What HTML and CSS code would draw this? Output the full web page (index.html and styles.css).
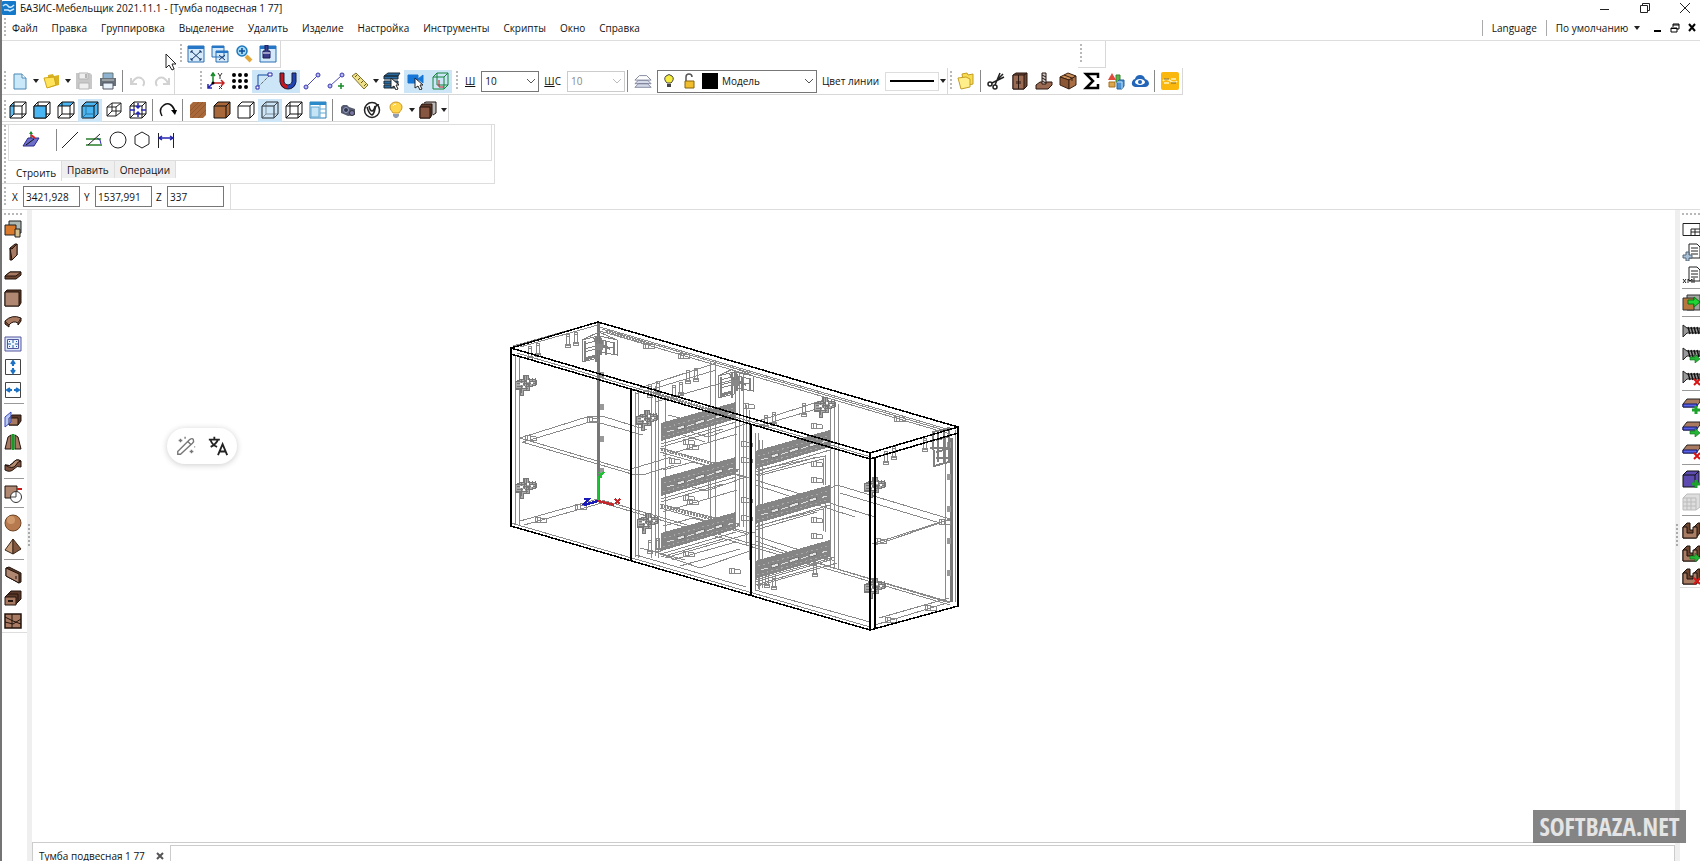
FILE: index.html
```html
<!DOCTYPE html>
<html lang="ru">
<head>
  <meta charset="utf-8">
  <title>БАЗИС-Мебельщик 2021.11.1 - [Тумба подвесная 1 77]</title>
  <meta name="viewport" content="width=device-width, initial-scale=1">
  <link rel="stylesheet" href="styles.css">
</head>
<body>
  <!-- общие символы -->
  <svg class="sprite" aria-hidden="true">
    <symbol id="cube" viewBox="0 0 18 18"><path d="M1 5h12v12H1zM1 5l4-4h12v12l-4 4M13 5l4-4M5 1v12h12M1 17l4-4" fill="none" stroke="#111"/></symbol>
    <symbol id="solid" viewBox="0 0 18 18"><path d="M1 5h12v12H1zM1 5l4-4h12v12l-4 4M13 5l4-4" stroke="#111"/></symbol>
    <symbol id="plus" viewBox="0 0 18 18"><path d="M14 10v8M10 14h8" stroke="#1ca32c" stroke-width="3"/></symbol>
    <symbol id="arrow" viewBox="0 0 18 18"><path d="M8 12h5V9l5 5-5 4v-3H8z" fill="#25b536" stroke="#0b6d18" stroke-width=".6"/></symbol>
    <symbol id="cross" viewBox="0 0 18 18"><path d="M12 11l6 6M18 11l-6 6" stroke="#d81414" stroke-width="2"/></symbol>
    <symbol id="pointer" viewBox="0 0 18 18"><path d="M8 6v10l3-2 2 4 2-1-2-4h3z" fill="#fff" stroke="#222"/></symbol>
    <symbol id="screw" viewBox="0 0 18 18"><path d="M1 3l4 3h13v5H5l-4 4z" fill="#999" stroke="#222"/><path d="M6 5l2 7M9 5l2 7M12 5l2 7M15 5l2 7" stroke="#111" stroke-width="1.4"/></symbol>
    <symbol id="edge" viewBox="0 0 18 18"><path d="M5 3h13v3l-4 5H1V8z" fill="#a87a60" stroke="#222"/><path d="M1 8h14v3H1z" fill="#5b63e8" stroke="#14186a"/></symbol>
    <symbol id="groove" viewBox="0 0 18 18"><path d="M1 6l4-4h3v7h4V6l4-4h2v10l-4 5H1z" fill="#6d4632" stroke="#1c100a"/><path d="M1 6h4v6h6V6h4v11H1z" fill="#a97c64" stroke="#1c100a"/></symbol>
    <symbol id="window" viewBox="0 0 18 18"><path d="M1 1h16v16H1z" fill="#d4e9fa" stroke="#2a6eb4"/><path d="M1 1h16v3H1z" fill="#2676c8"/></symbol>
    <symbol id="bulb" viewBox="0 0 18 18"><path d="M6 12C5 10 3 9 3 6a6 5 0 0 1 12 0c0 3-2 4-3 6z" fill="#ffd54a" stroke="#c9972a"/><path d="M6 13h6v2l-2 2H8l-2-2z" fill="#8f9bb0"/><path d="M6 5q1-2 3-2" fill="none" stroke="#fff"/></symbol>
    <!-- фурнитура модели -->
    <symbol id="rail" viewBox="0 0 76 38" overflow="visible">
      <path d="M0 20L75-1v17L0 38z" fill="#858585"/>
      <path d="M6 29l66-19" stroke="#ddd" stroke-dasharray="7 3 2 9" fill="none"/>
      <path d="M3 25L73 5M2 34l70-20" stroke="#a8a8a8" stroke-dasharray="2 3" fill="none"/>
      <path d="M16 24l7-2v3l-7 2zM34 19l9-3v3l-9 3zM54 13l7-2v3l-7 2z" fill="#e4e4e4" stroke="#666" stroke-width=".7"/>
      <path d="M0 41l75-22M0 44l62-18" stroke="#888" fill="none"/>
    </symbol>
    <symbol id="hinge" viewBox="0 0 24 24" overflow="visible">
      <path d="M1 9l5-4h3V1h5v4l8 1v5l-7 2v3H9v5H6v-6H1z" fill="#aaa"/>
      <path d="M1 9l5-4h3V1h5v4l8 1v5l-7 2v3H9v5H6v-6H1zM1 7h22M3 9h18M3 12h16M2 14h12M7 5v14M10 1v14M12 2v14M15 4v11M18 4v9M21 4v8M9 4l6 8M5 6l8 8" fill="none" stroke="#777"/>
      <path d="M6 10h3M13 7h2M17 9h2M9 13h2" stroke="#fff" stroke-width="1.500"/>
    </symbol>
    <symbol id="plate" viewBox="0 0 36 28" overflow="visible">
      <path d="M0 5l16-4v22L0 27zM18 1l17 4v15l-17-3zM2 9l12-3v5L2 14zM2 17l12-3v6L2 23zM20 5l12 3v5l-12-2zM0 5l17-8 18 8" fill="none" stroke="#808080"/>
      <path d="M3 6v18M14 1v26M16 8l12 6M14 12h9M24 6v14M32 7v12M12 3l8 12M19 3v17M2 25l12-4" stroke="#808080" stroke-width="2" fill="none"/>
      <path d="M13 9h8v6h-8z" fill="#888"/>
    </symbol>
    <symbol id="pin" viewBox="0 0 6 14" overflow="visible"><path d="M1 2h3v9H1zM1 2l1-2h2v9M0 10h5v3H0z" fill="none" stroke="#888"/></symbol>
    <symbol id="cam" viewBox="0 0 12 8" overflow="visible"><circle cx="4" cy="4" r="3" fill="none" stroke="#888"/><path d="M6 2l6 1v3L6 6M3 1v6" fill="none" stroke="#888"/></symbol>
  </svg>

  <header class="titlebar">
    <svg class="logo" viewBox="0 0 14 14"><rect width="14" height="14" rx="1" fill="#1479c9"/><path d="M1 5q3-3 5 0t6-1M2 9h4l2 1 4-2" fill="none" stroke="#cfeaff" stroke-width="1.500"/></svg>
    <h1 class="caption">БАЗИС-Мебельщик 2021.11.1 - [Тумба подвесная 1 77]</h1>
    <div class="window-buttons">
      <button type="button" aria-label="Свернуть"><svg viewBox="0 0 10 10"><path d="M0 6.500h9" stroke="#222"/></svg></button>
      <button type="button" aria-label="Восстановить"><svg viewBox="0 0 10 10" fill="none" stroke="#222"><path d="M.5 2.500h7v7h-7zM2.500 2.500v-2h7v7h-2"/></svg></button>
      <button type="button" aria-label="Закрыть"><svg viewBox="0 0 10 10" stroke="#222"><path d="M0 0l10 10M10 0L0 10"/></svg></button>
    </div>
  </header>

  <nav class="menubar">
    <div class="grip"></div>
    <button type="button">Файл</button>
    <button type="button">Правка</button>
    <button type="button">Группировка</button>
    <button type="button">Выделение</button>
    <button type="button">Удалить</button>
    <button type="button">Изделие</button>
    <button type="button">Настройка</button>
    <button type="button">Инструменты</button>
    <button type="button">Скрипты</button>
    <button type="button">Окно</button>
    <button type="button">Справка</button>
    <div class="menubar-right">
      <button type="button" class="framed">Language</button>
      <button type="button" class="framed">По умолчанию <span class="tri"></span></button>
      <button type="button" class="mdi" aria-label="Свернуть документ"><svg viewBox="0 0 10 10"><path d="M1 8h7" stroke="#000" stroke-width="2"/></svg></button>
      <button type="button" class="mdi" aria-label="Восстановить документ"><svg viewBox="0 0 10 10" fill="none" stroke="#000"><path d="M1 5h6v4H1zM3 4V1h6v5H7M3 2h6M1 5.500h6"/></svg></button>
      <button type="button" class="mdi" aria-label="Закрыть документ"><svg viewBox="0 0 10 10" stroke="#000" stroke-width="2"><path d="M2 1l6 7M8 1L2 8"/></svg></button>
    </div>
  </nav>

  <div class="toolrow toolrow-views">
    <div class="toolbar toolbar-zoom">
      <div class="grip"></div>
      <button type="button" class="tool" aria-label="Показать все"><svg viewBox="0 0 18 18"><use href="#window"/><path d="M4 6l10 9M14 6L4 15M4 8V6h2M14 8V6h-2M4 13v2h2M14 13v2h-2" stroke="#16366c" fill="none"/></svg></button>
      <button type="button" class="tool" aria-label="Показать все виды"><svg viewBox="0 0 18 18"><path d="M1 1h12v11H1zM5 6h12v11H5z" fill="#d4e9fa" stroke="#2a6eb4"/><path d="M1 1h12v2H1zM5 6h12v2H5z" fill="#2676c8"/><path d="M8 10l6 5M14 10l-6 5" stroke="#16366c"/></svg></button>
      <button type="button" class="tool" aria-label="Увеличить"><svg viewBox="0 0 18 18"><path d="M11 11l5 5" stroke="#e3a83c" stroke-width="4"/><circle cx="7" cy="6" r="5" fill="#a5dbf5" stroke="#1e78bd" stroke-width="1.500"/><path d="M7 3v6M4 6h6" stroke="#0b4c9a" stroke-width="1.500"/></svg></button>
      <button type="button" class="tool" aria-label="Перерисовать"><svg viewBox="0 0 18 18"><use href="#window"/><path d="M6 0h3v6h2v7H4V6h2z" fill="#3b3c8c" stroke="#1a1b50"/><path d="M4 8h7" stroke="#fff"/></svg></button>
    </div>
    <div class="toolbar toolbar-empty"><div class="grip"></div></div>
  </div>

  <div class="toolrow">
    <div class="toolbar">
      <div class="grip"></div>
      <button type="button" class="tool" aria-label="Создать"><svg viewBox="0 0 18 18"><path d="M3 2h8l4 4v11H3z" fill="#c9e8fa" stroke="#4a87b4"/><path d="M11 2v4h4" fill="#fff" stroke="#4a87b4"/></svg></button>
      <button type="button" class="drop" aria-label="Варианты создания"><span class="tri"></span></button>
      <button type="button" class="tool" aria-label="Открыть"><svg viewBox="0 0 18 18"><path d="M5 3l5-1 1 2 5-1v10L5 16z" fill="#d9b324"/><path d="M1 6l10-1 2 8-9 3z" fill="#ffe45c" stroke="#d0a51b"/></svg></button>
      <button type="button" class="drop" aria-label="Последние файлы"><span class="tri"></span></button>
      <button type="button" class="tool" aria-label="Сохранить" disabled><svg viewBox="0 0 18 18"><path d="M1 1h14l2 2v14H1z" fill="#c8c8c8"/><path d="M4 1h9v6H4zM4 11h10v6H4z" fill="#efefef" stroke="#b5b5b5"/><path d="M10 2h2v4h-2z" fill="#b5b5b5"/></svg></button>
      <button type="button" class="tool" aria-label="Печать"><svg viewBox="0 0 18 18"><path d="M4 1h10v6H4z" fill="#8fb4d2" stroke="#677"/><path d="M1 6h16v8H1z" fill="#68727b"/><path d="M4 11h10v6H4z" fill="#e8f2fa" stroke="#556"/><path d="M3 8h12" stroke="#ccc"/></svg></button>
      <div class="sep"></div>
      <button type="button" class="tool" aria-label="Отменить" disabled><svg viewBox="0 0 18 18" fill="none" stroke="#d2d2d2" stroke-width="2"><path d="M2 6v6h6M3 11q4-7 9-5 5 3 2 8"/></svg></button>
      <button type="button" class="tool" aria-label="Повторить" disabled><svg viewBox="0 0 18 18" fill="none" stroke="#d2d2d2" stroke-width="2"><path d="M16 6v6h-6M15 11Q11 4 6 6q-5 3-2 8"/></svg></button>
    </div>
    <div class="toolbar toolbar-snap">
      <div class="grip"></div>
      <button type="button" class="tool" aria-label="Оси"><svg viewBox="0 0 18 18" fill="none" stroke-width="1.500"><path d="M6 11V2M4 4l2-3 2 3" stroke="#168c28"/><path d="M6 11h11M14 8l3 3-3 3" stroke="#c22020"/><path d="M6 11l-5 5M1 12v4h4" stroke="#2323ad"/><path d="M11 1l2 3 2-3M13 4v3M12 14l3 3M15 14l-3 3" stroke="#333" stroke-width="1"/><circle cx="6" cy="11" r="1.500" fill="#000"/></svg></button>
      <button type="button" class="tool" aria-label="Сетка"><svg viewBox="0 0 18 18"><path d="M3 3h13M3 9h13M3 15h13" stroke="#000" stroke-width="4" stroke-dasharray="0 6" stroke-linecap="round"/></svg></button>
      <button type="button" class="tool active" aria-label="Привязка"><svg viewBox="0 0 18 18" fill="none"><path d="M3 15V3h12" stroke="#15489a"/><path d="M3 15L15 3" stroke="#333" stroke-dasharray="1 1"/><path d="M1 14h3v3H1zM13 1h4v3h-4z" fill="#fff" stroke="#2a2aa8"/></svg></button>
      <button type="button" class="tool active" aria-label="Магнит"><svg viewBox="0 0 18 18" fill="none" stroke-width="4"><path d="M3 1v8q0 6 6 6" stroke="#c3171d"/><path d="M15 1v8q0 6-6 6" stroke="#2144b5"/><path d="M1 1h4v9q1 3 4 3t4-3V1h4v9q-2 7-8 7T1 10z" stroke="#181833" stroke-width="1"/></svg></button>
      <button type="button" class="tool" aria-label="По отрезку"><svg viewBox="0 0 18 18"><path d="M3 15L14 4" stroke="#4a4ab4"/><circle cx="3" cy="15" r="2" fill="#b9b9f2" stroke="#3a3ab0"/><circle cx="15" cy="3" r="2" fill="#b9b9f2" stroke="#3a3ab0"/></svg></button>
      <button type="button" class="tool" aria-label="Добавить точку"><svg viewBox="0 0 18 18"><path d="M3 14L14 4" stroke="#4a4ab4"/><circle cx="3" cy="14" r="2" fill="#b9b9f2" stroke="#3a3ab0"/><circle cx="15" cy="3" r="2" fill="#b9b9f2" stroke="#3a3ab0"/><path d="M14 11v6M11 14h6" stroke="#168c28" stroke-width="1.500"/></svg></button>
      <button type="button" class="tool" aria-label="Измерить"><svg viewBox="0 0 18 18"><path d="M1 4l4-3 12 12-4 4z" fill="#efe08a" stroke="#827333"/><path d="M6 3L4 5M9 6L7 8M12 9l-2 2M15 12l-2 2" stroke="#665820"/></svg></button>
      <button type="button" class="drop" aria-label="Виды измерений"><span class="tri"></span></button>
      <button type="button" class="tool" aria-label="Выбор слоя"><svg viewBox="0 0 18 18"><path d="M1 4l4-3h12l-2 3zM1 4h14v3H1zM1 9h14v3H1zM1 13h11v3H1z" fill="#286a9f" stroke="#1b2b38"/><use href="#pointer"/></svg></button>
      <button type="button" class="tool active" aria-label="Камера"><svg viewBox="0 0 18 18"><path d="M1 3h10v8H1zM11 7l5-4v8z" fill="#1677d8" stroke="#1677d8"/><use href="#pointer"/></svg></button>
      <button type="button" class="tool active" aria-label="Габарит"><svg viewBox="0 0 18 18" fill="none"><path d="M2 5h11v12H2zM2 5l4-4h11v12l-4 4M13 5l4-4M6 1v12h11" stroke="#16833a"/><path d="M8 8v7h5" stroke="#c22020"/></svg></button>
    </div>
    <div class="toolbar toolbar-props">
      <div class="grip"></div>
      <label for="lineWidth"><u>Ш</u></label>
      <span class="combo combo-small">
        <select id="lineWidth"><option>10</option></select>
        <svg class="chevron" viewBox="0 0 8 5"><path d="M0 0l4 4 4-4"/></svg>
      </span>
      <label for="lineWidthAll"><u>Ш</u>С</label>
      <span class="combo combo-small combo-off">
        <select id="lineWidthAll" disabled><option>10</option></select>
        <svg class="chevron" viewBox="0 0 8 5"><path d="M0 0l4 4 4-4"/></svg>
      </span>
      <div class="sep"></div>
      <button type="button" class="tool" aria-label="Слои"><svg viewBox="0 0 20 18" fill="#d5d9e8" stroke="#7a8098"><path d="M1 16l4-4h10l4 4zM1 12l4-4h10l4 4z"/><path d="M1 8l5-5h8l5 5z" fill="#fff"/></svg></button>
      <span class="combo combo-layer">
        <span class="layer-marks">
          <svg class="mark" viewBox="0 0 14 16"><path d="M5 10Q1 6 4 3q3-3 6 0 3 3-1 7z" fill="#f6ec3d" stroke="#444"/><path d="M5 11h4v3H5z" fill="#444"/></svg>
          <svg class="mark" viewBox="0 0 14 16"><path d="M4 8V4q0-3 3-3t3 3" fill="none" stroke="#555" stroke-width="1.500"/><path d="M3 8h9v7H3z" fill="#f0bd2c" stroke="#86620d"/></svg>
          <i class="swatch"></i>
        </span>
        <select id="layer" aria-label="Слой"><option>Модель</option></select>
        <svg class="chevron" viewBox="0 0 8 5"><path d="M0 0l4 4 4-4"/></svg>
      </span>
      <label for="lineColor">Цвет линии</label>
      <button type="button" class="line-sample" id="lineColor"><span></span></button>
      <button type="button" class="drop" aria-label="Выбор цвета линии"><span class="tri"></span></button>
    </div>
    <div class="toolbar">
      <div class="grip"></div>
      <button type="button" class="tool" aria-label="Библиотека"><svg viewBox="0 0 18 18" fill="#f8dc52" stroke="#c49e24"><path d="M5 2l5-1 1 2 5-1v10l-9 2z"/><path d="M1 6l8-1 4 2v8l-9 2z" fill="#ffee8a"/></svg></button>
      <div class="sep"></div>
      <button type="button" class="tool" aria-label="Раскрой"><svg viewBox="0 0 18 18" fill="none" stroke="#222" stroke-width="1.500"><path d="M8 13L13 1M5 11L17 5M11 7l5-5"/><circle cx="3" cy="12" r="2"/><circle cx="8" cy="15" r="2"/></svg></button>
      <button type="button" class="tool" aria-label="Шкаф"><svg viewBox="0 0 18 18" stroke="#2a1710"><path d="M2 3l3-2h11v13l-3 3H2z" fill="#6d4634"/><path d="M2 3h11v14H2z" fill="#9b6a53"/><path d="M7.500 3v14M6 9v3M9 9v3M13 3l3-2"/></svg></button>
      <button type="button" class="tool" aria-label="Крепеж"><svg viewBox="0 0 18 18" stroke="#2a1710"><path d="M1 13l4-3h12v3l-4 4H1z" fill="#9b6a53"/><path d="M7 1h4v11H7z" fill="#ccc"/><path d="M7 3l4 2M7 6l4 2M7 9l4 2"/></svg></button>
      <button type="button" class="tool" aria-label="Упаковка"><svg viewBox="0 0 18 18" stroke="#3a2113"><path d="M1 5l8-4 8 3-7 4z" fill="#c98d58"/><path d="M1 5l9 3v9l-9-4z" fill="#8c5735"/><path d="M17 4v9l-7 4V8z" fill="#a96e43"/><path d="M5 3l8 3v3" fill="none"/></svg></button>
      <button type="button" class="tool" aria-label="Смета"><svg viewBox="0 0 18 18"><path d="M15 6V2H3l7 7-7 7h12v-4" fill="none" stroke="#000" stroke-width="2.500"/></svg></button>
      <button type="button" class="tool" aria-label="Материалы"><svg viewBox="0 0 18 18"><path d="M1 8l4-7 4 7z" fill="#e04b3c"/><path d="M9 3h4v7H9z" fill="#5cb24d" stroke="#39802e"/><path d="M2 10h6v5H2z" fill="#dca74a" stroke="#a46f25"/><path d="M10 10l2-2h5v6l-2 3h-5z" fill="#4c91d0" stroke="#24619a"/><path d="M10 10h5v7" fill="none" stroke="#bfe0f8"/></svg></button>
      <button type="button" class="tool" aria-label="Облако"><svg viewBox="0 0 18 18"><path d="M4 15q-4-1-3-5 1-3 3-3 1-4 5-4t5 4q4 1 4 5-1 3-4 3z" fill="#2265b9"/><ellipse cx="9" cy="10" rx="5" ry="3" fill="#fff"/><circle cx="9" cy="10" r="2" fill="#2265b9"/></svg></button>
      <div class="sep"></div>
      <button type="button" class="tool" aria-label="Салон"><svg viewBox="0 0 18 18"><rect width="18" height="18" rx="2" fill="#fab80f"/><path d="M2 9q2-3 6-1l3 2q4 1 5-1M3 11h5M10 7h5" fill="none" stroke="#fff3c0" stroke-width="1.500"/><path d="M3 7h5M10 11h5" stroke="#846214"/></svg></button>
    </div>
  </div>

  <div class="toolrow">
    <div class="toolbar toolbar-model">
      <div class="grip grip-tight"></div>
      <button type="button" class="tool" aria-label="Вид слева"><svg viewBox="0 0 18 18"><path d="M1 5l4-4v12l-4 4z" fill="#5cbdf2"/><use href="#cube"/></svg></button>
      <button type="button" class="tool" aria-label="Вид спереди"><svg viewBox="0 0 18 18"><use href="#cube"/><path d="M1 5h12v12H1z" fill="#4ab6f3" stroke="#111"/></svg></button>
      <button type="button" class="tool" aria-label="Вид сверху"><svg viewBox="0 0 18 18"><path d="M1 5l4-4h12l-4 4z" fill="#4ab6f3"/><use href="#cube"/></svg></button>
      <button type="button" class="tool active" aria-label="Аксонометрия"><svg viewBox="0 0 18 18"><use href="#solid" fill="#4ab6f3"/><path d="M5 5v8h8M1 17l4-4" stroke="#27749f" fill="none"/></svg></button>
      <button type="button" class="tool" aria-label="Перспектива"><svg viewBox="0 0 18 18" fill="none" stroke="#222"><path d="M2 6h9v9H2zM2 6l5-4h9v9l-5 4M11 6l5-4M7 2v8h9M2 15l5-5"/></svg></button>
      <button type="button" class="tool" aria-label="Центр вида"><svg viewBox="0 0 18 18"><use href="#cube"/><path d="M9 2v5M9 16v-5M1 9h5M17 9h-5M7 5l2 2 2-2M7 13l2-2 2 2" fill="none" stroke="#2929bd" stroke-width="1.500"/></svg></button>
      <div class="sep"></div>
      <button type="button" class="tool" aria-label="Повернуть"><svg viewBox="0 0 18 18"><path d="M3 15q-4-7 2-11 7-4 11 6" fill="none" stroke="#111" stroke-width="1.500"/><path d="M12 9h6l-2 5z"/></svg></button>
      <div class="sep"></div>
      <button type="button" class="tool" aria-label="Текстуры"><svg viewBox="0 0 18 18"><path d="M1 4l3-3h13v13l-3 3H1z" fill="#a9683a"/><path d="M1 10L10 1M1 14L14 1M3 17L17 3M9 17l8-8" stroke="#8b5028" opacity=".7"/></svg></button>
      <button type="button" class="tool" aria-label="Текстуры с контуром"><svg viewBox="0 0 18 18"><use href="#solid" fill="#a9683a"/></svg></button>
      <button type="button" class="tool" aria-label="Без невидимых линий"><svg viewBox="0 0 18 18"><use href="#solid" fill="#fff"/></svg></button>
      <button type="button" class="tool active" aria-label="Полупрозрачный каркас"><svg viewBox="0 0 18 18" fill="none"><use href="#cube" opacity=".4"/><use href="#solid" fill="none" opacity=".6"/></svg></button>
      <button type="button" class="tool" aria-label="Каркас"><svg viewBox="0 0 18 18"><use href="#cube"/></svg></button>
      <button type="button" class="tool" aria-label="Панели"><svg viewBox="0 0 18 18"><path d="M1 1h16v16H1z" fill="#fff" stroke="#2a7eb4"/><path d="M1 1h16v3H1z" fill="#2a8bc8"/><path d="M11 4v13M11 8h6M11 12h6M2 6h8v10H2z" fill="#c5e5f7" stroke="#64a9d2"/></svg></button>
      <div class="sep"></div>
      <button type="button" class="tool" aria-label="Снимок"><svg viewBox="0 0 18 18"><path d="M2 6l2-2h4l2 2 6 2v6l-7 1-7-3z" fill="#555b70"/><circle cx="7" cy="9" r="2.500" fill="#303550" stroke="#9aa0c0"/><circle cx="13" cy="12" r="2.500" fill="#7b76a8" stroke="#333"/></svg></button>
      <button type="button" class="tool" aria-label="V-Ray"><svg viewBox="0 0 18 18" fill="none" stroke="#222"><circle cx="9" cy="9" r="7.500" stroke-width="1.500"/><path d="M4 6q2 7 5 8 2-1 3-6t4-4M6 5q1 5 3 5t3-5" stroke-width="1.500"/></svg></button>
      <button type="button" class="tool" aria-label="Освещение"><svg viewBox="0 0 18 18"><use href="#bulb"/></svg></button>
      <button type="button" class="drop" aria-label="Варианты освещения"><span class="tri"></span></button>
      <button type="button" class="tool" aria-label="Материал фасада"><svg viewBox="0 0 18 18" stroke="#24130c"><path d="M5 2l2-1h10v11l-3 2" fill="#bbb"/><path d="M1 6l2-3h10v11l-2 3H1z" fill="#5e3b2a"/><path d="M1 6h10v11H1z" fill="#875640"/></svg></button>
      <button type="button" class="drop" aria-label="Другие материалы"><span class="tri"></span></button>
    </div>
  </div>

  <section class="draw-panel">
    <div class="grip grip-tall"></div>
    <div class="draw-body">
      <div class="draw-tools">
        <button type="button" class="tool" aria-label="Рабочая плоскость"><svg viewBox="0 0 18 18"><path d="M1 15l5-8h11l-5 8z" fill="#6e6ecb" stroke="#2a2a8c"/><path d="M4 14l8-6M9 7V1" stroke="#111"/><path d="M7 3l2-3 2 3z" fill="#168c28"/><path d="M9 4l4 3" stroke="#d22" stroke-width="2"/></svg></button>
        <div class="sep"></div>
        <button type="button" class="tool" aria-label="Отрезок"><svg viewBox="0 0 18 18"><path d="M1 17L17 1" stroke="#222"/></svg></button>
        <button type="button" class="tool" aria-label="Параллельно"><svg viewBox="0 0 18 18" fill="none"><path d="M1 8h15M1 14h16" stroke="#287d28" stroke-width="1.500"/><path d="M3 14L15 3" stroke="#222"/><path d="M12 7q4 1 4 6" stroke="#2a2ab0"/></svg></button>
        <button type="button" class="tool" aria-label="Окружность"><svg viewBox="0 0 18 18"><circle cx="9" cy="9" r="8" fill="none" stroke="#222"/></svg></button>
        <button type="button" class="tool" aria-label="Многоугольник"><svg viewBox="0 0 18 18"><path d="M9 1l7 4v8l-7 4-7-4V5z" fill="none" stroke="#222"/></svg></button>
        <button type="button" class="tool" aria-label="Размер"><svg viewBox="0 0 18 18" fill="none"><path d="M1.500 2v15M16.500 2v15" stroke="#222"/><path d="M2 7h14M5 5L2 7l3 2M13 5l3 2-3 2" stroke="#2525b0" stroke-width="1.500"/></svg></button>
      </div>
      <div class="draw-tabs" role="tablist">
        <button type="button" role="tab" aria-selected="true">Строить</button>
        <button type="button" role="tab">Править</button>
        <button type="button" role="tab">Операции</button>
      </div>
    </div>
  </section>

  <form class="coords">
    <div class="grip"></div>
    <label for="coordX">X</label>
    <input type="text" id="coordX" value="3421,928">
    <label for="coordY">Y</label>
    <input type="text" id="coordY" value="1537,991">
    <label for="coordZ">Z</label>
    <input type="text" id="coordZ" value="337">
    <div class="coords-end"></div>
  </form>

  <main class="workspace">
    <aside class="palette">
      <div class="grip-line"></div>
      <button type="button" aria-label="Материал"><svg viewBox="0 0 18 18" stroke="#222"><path d="M5 1h12v12H5z" fill="#aeb9b6"/><path d="M1 5h11v10H1z" fill="#d97a2c"/><path d="M11 9h5v8h-5z" fill="#d3bd8a"/></svg></button>
      <button type="button" aria-label="Вертикальная панель"><svg viewBox="0 0 18 18" stroke="#23140d"><path d="M6 5l5-4h2v11l-5 5H6z" fill="#6e4632"/><path d="M6 5l2 1 5-5v11l-5 5z" fill="#a97a62"/></svg></button>
      <button type="button" aria-label="Горизонтальная панель"><svg viewBox="0 0 18 18" stroke="#23140d"><path d="M1 10l5-4h11v3l-5 4H1z" fill="#6e4632"/><path d="M1 10l5-4h11l-5 4z" fill="#a97a62"/></svg></button>
      <button type="button" aria-label="Фронтальная панель"><svg viewBox="0 0 18 18" stroke="#23140d"><path d="M1 3l2-2h14v13l-2 3H1z" fill="#5c3828"/><path d="M1 3h14v14H1z" fill="#b08770"/></svg></button>
      <button type="button" aria-label="Гнутая панель"><svg viewBox="0 0 18 18" stroke="#23140d"><path d="M1 9q7-7 16-3l-3 5q-5-3-9 2z" fill="#a97a62"/><path d="M1 9v3l4 3v-2M14 11v2l3-4V6" fill="#6e4632"/></svg></button>
      <button type="button" aria-label="Объем"><svg viewBox="0 0 18 18" fill="none"><path d="M1 2h16v14H1z" fill="#dbe8fb" stroke="#55559c"/><path d="M3.500 4.500h11v9h-11z" fill="#eef5ff" stroke="#55559c"/><path d="M9 5v3M9 13v-3M4 9h3M14 9h-3M5 6l1 1M13 6l-1 1M5 12l1-1M13 12l-1-1" stroke="#1c5dab"/></svg></button>
      <button type="button" aria-label="По высоте"><svg viewBox="0 0 18 18"><path d="M1.500 1.500h15v15h-15z" fill="#fff" stroke="#444"/><path d="M9 3v5M9 10v5M7 6l2-3 2 3M7 12l2 3 2-3" fill="none" stroke="#1e72c4" stroke-width="2"/></svg></button>
      <button type="button" aria-label="По ширине"><svg viewBox="0 0 18 18"><path d="M1.500 1.500h15v15h-15z" fill="#fff" stroke="#444"/><path d="M3 9h5M10 9h5M6 7L3 9l3 2M12 7l3 2-3 2" fill="none" stroke="#1e72c4" stroke-width="2"/></svg></button>
      <hr>
      <button type="button" aria-label="Кромка"><svg viewBox="0 0 18 18" stroke="#23140d"><path d="M5 8l3-3h9v6l-3 4H5z" fill="#5c3828"/><path d="M5 8h9v7H5z" fill="#a97a62"/><path d="M1 7l6-5v10l-6 5z" fill="#8ba2f0" fill-opacity=".6" stroke="#3648b8"/></svg></button>
      <button type="button" aria-label="Симметрия"><svg viewBox="0 0 18 18" stroke="#23140d"><path d="M1 16L4 4l3-2v14zM11 16V2l3 2 3 12z" fill="#a97a62"/><path d="M9 1v16" stroke="#179b25" stroke-width="3"/></svg></button>
      <button type="button" aria-label="Гнутье"><svg viewBox="0 0 18 18" stroke="#23140d"><path d="M1 9q5 2 8-2 3-5 8-2v6q-4-2-7 2-4 4-9 1z" fill="#7c523e"/><path d="M1 9q5 2 8-2 3-5 8-2-3 0-5 4-3 5-11 0" fill="#b58b72"/></svg></button>
      <hr>
      <button type="button" aria-label="Вырез"><svg viewBox="0 0 18 18"><path d="M1 1h12v12H1z" fill="#b08770" stroke="#23140d"/><path d="M13 4h5" stroke="#d01818" stroke-width="2"/><circle cx="12" cy="12" r="5.500" fill="#fff" stroke="#333"/><path d="M12 7v5H7" fill="none" stroke="#444"/></svg></button>
      <hr>
      <button type="button" aria-label="Сфера"><svg viewBox="0 0 18 18"><circle cx="9" cy="9" r="8" fill="#b67a4e" stroke="#6e4426"/><circle cx="7" cy="6" r="4" fill="#dba679" opacity=".7"/></svg></button>
      <button type="button" aria-label="Пирамида"><svg viewBox="0 0 18 18" stroke="#3d2718"><path d="M9 2L1 13l8 4z" fill="#c69b79"/><path d="M9 2l8 10-8 5z" fill="#815740"/></svg></button>
      <hr>
      <button type="button" aria-label="Дверь"><svg viewBox="0 0 18 18" stroke="#23140d"><path d="M2 2l3-1 12 6v9l-2 1-13-7z" fill="#5c3828"/><path d="M2 2l13 6v9L2 10z" fill="#b08770"/><path d="M12 10v3"/></svg></button>
      <button type="button" aria-label="Ящик"><svg viewBox="0 0 18 18" stroke="#23140d"><path d="M1 8l6-6h10v8l-6 6" fill="#5c3828"/><path d="M4 5h10M14 5v8"/><path d="M1 8h11v8H1z" fill="#a97a62"/><path d="M4 12h5" stroke-width="2"/></svg></button>
      <button type="button" aria-label="Раскладка"><svg viewBox="0 0 18 18"><path d="M1 2h16v14H1z" fill="#a97a62" stroke="#23140d" stroke-width="1.500"/><path d="M1 5l8 4 8 3M1 10l8 2 8-5M8 2v14" fill="none" stroke="#23140d"/></svg></button>
    </aside>
    <div class="splitter"></div>
    <div class="document">
      <div class="viewport">
        <svg class="model" viewBox="500 310 470 330" fill="none" role="img" aria-label="Тумба подвесная">
          <!-- скрытые линии -->
          <g stroke="#8a8a8a">
            <path d="M515 355v170M519 357v168M513 346l85-24M520 347l78-22M600 327l350 103M600 331l350 103M602 329l345 102"/>
            <path d="M517 353l354 104M511 523l359 104M520 521l78-22M524 525l78-22M602 500l348 102M606 504l344 101"/>
            <path d="M520 438l70-22h12l45 14M523 442l70-21 50 14M520 438l111 33M522 442l110 32h14l28-9M631 474v-5l40-12"/>
            <path d="M635 392v165M638 392v166M651 388v170M655 386v170M658 390v168M665 400v150M710 362v170M715 362v172M735 370v160M739 372v155M743 374v153"/>
            <path d="M631 391l85-28M636 394l80-24M655 402l81-23M660 448l80 22M660 452l90 26M660 504l80 20M660 508l90 25M670 426l38 11 40-14M670 431l35 11M668 480l38 11 40-14M665 558l90-26M660 554l40 14 50-17"/>
            <path d="M755 422l72-23M755 427l72-21M757 470l68-14v29M757 520l68-17v29M757 476l66-17v26M757 526l66-17v22M830 402v165M834 402v166M838 404v166M755 433v158M758 433v156"/>
            <path d="M755 480l120 37M755 485l100 32M755 536l80 25M755 541l70 24M829 489l8-4 113 34-78 25M840 493l100 30-65 22M755 580l80-23M757 586l80-23M830 567l120 36M755 590l115 32M636 555l110 32M640 548l45 12"/>
            <path d="M945 436v164M955 430v172M875 625l72-22M879 618l70-20"/>
            <path d="M663 456l74-22M663 512l74-22M663 470l30-8 54 16M663 526l30-8 54 16M668 415l40 10M708 425v18M708 480v18M746 405v140M749 410v150M759 440v150M762 440v148M672 560l64-18M680 566l60-17"/>
          </g>
          <path d="M598 322v180M951 438v164" stroke="#777" stroke-width="3"/>
          <path d="M602 340v160M949 442v160" stroke="#999" stroke-dasharray="6 26" stroke-width="4"/>
          <path d="M661 449l78 22M661 506l78 20M606 331l40 12M650 392l86 25" stroke="#888" stroke-width="3" stroke-dasharray="2 1"/>
          <!-- направляющие ящиков -->
          <use href="#rail" x="661" y="403" width="76" height="38"/>
          <use href="#rail" x="661" y="458" width="76" height="38"/>
          <use href="#rail" x="661" y="513" width="76" height="38"/>
          <use href="#rail" x="755" y="431" width="76" height="38"/>
          <use href="#rail" x="755" y="486" width="76" height="38"/>
          <use href="#rail" x="755" y="541" width="76" height="38"/>
          <!-- петли -->
          <use href="#hinge" x="514" y="374" width="24" height="24"/>
          <use href="#hinge" x="514" y="477" width="24" height="24"/>
          <use href="#hinge" x="635" y="409" width="24" height="24"/>
          <use href="#hinge" x="636" y="512" width="24" height="24"/>
          <use href="#hinge" x="863" y="476" width="24" height="24"/>
          <use href="#hinge" x="863" y="577" width="24" height="24"/>
          <use href="#hinge" x="813" y="396" width="24" height="24"/>
          <!-- навесы -->
          <use href="#plate" x="582" y="335" width="36" height="28"/>
          <use href="#plate" x="718" y="371" width="36" height="28"/>
          <path d="M933 432l16-4v34l-15 4zM936 440l12-3M936 452l12-3M938 432v30M944 431v31M930 448h18M936 458h12" stroke="#808080" stroke-width="2"/>
          <!-- стяжки и шканты -->
          <use href="#pin" x="527" y="346" width="6" height="14"/><use href="#pin" x="535" y="343" width="6" height="14"/>
          <use href="#pin" x="565" y="334" width="6" height="14"/><use href="#pin" x="573" y="332" width="6" height="14"/>
          <use href="#pin" x="647" y="384" width="6" height="14"/><use href="#pin" x="655" y="381" width="6" height="14"/>
          <use href="#pin" x="671" y="385" width="6" height="14"/><use href="#pin" x="678" y="382" width="6" height="14"/>
          <use href="#pin" x="685" y="370" width="6" height="14"/><use href="#pin" x="693" y="368" width="6" height="14"/>
          <use href="#pin" x="763" y="415" width="6" height="14"/><use href="#pin" x="771" y="412" width="6" height="14"/>
          <use href="#pin" x="801" y="403" width="6" height="14"/><use href="#pin" x="883" y="451" width="6" height="14"/>
          <use href="#pin" x="891" y="446" width="6" height="14"/><use href="#pin" x="922" y="438" width="6" height="14"/>
          <use href="#pin" x="647" y="540" width="6" height="14"/><use href="#pin" x="655" y="538" width="6" height="14"/>
          <use href="#pin" x="764" y="574" width="6" height="14"/><use href="#pin" x="771" y="576" width="6" height="14"/><use href="#pin" x="812" y="563" width="6" height="14"/>
          <use href="#cam" x="642" y="342" width="12" height="8"/><use href="#cam" x="677" y="352" width="12" height="8"/>
          <use href="#cam" x="524" y="434" width="12" height="8"/><use href="#cam" x="586" y="416" width="12" height="8"/>
          <use href="#cam" x="534" y="516" width="12" height="8"/><use href="#cam" x="574" y="503" width="12" height="8"/>
          <use href="#cam" x="668" y="457" width="12" height="8"/><use href="#cam" x="682" y="438" width="12" height="8"/>
          <use href="#cam" x="686" y="443" width="12" height="8"/><use href="#cam" x="686" y="498" width="12" height="8"/>
          <use href="#cam" x="682" y="494" width="12" height="8"/><use href="#cam" x="682" y="550" width="12" height="8"/>
          <use href="#cam" x="742" y="402" width="12" height="8"/><use href="#cam" x="740" y="440" width="12" height="8"/>
          <use href="#cam" x="740" y="456" width="12" height="8"/><use href="#cam" x="740" y="496" width="12" height="8"/><use href="#cam" x="740" y="514" width="12" height="8"/>
          <use href="#cam" x="728" y="567" width="12" height="8"/><use href="#cam" x="810" y="422" width="12" height="8"/>
          <use href="#cam" x="810" y="460" width="12" height="8"/><use href="#cam" x="810" y="476" width="12" height="8"/>
          <use href="#cam" x="810" y="516" width="12" height="8"/><use href="#cam" x="810" y="532" width="12" height="8"/>
          <use href="#cam" x="874" y="537" width="12" height="8"/><use href="#cam" x="938" y="518" width="12" height="8"/>
          <use href="#cam" x="884" y="616" width="12" height="8"/><use href="#cam" x="924" y="604" width="12" height="8"/><use href="#cam" x="893" y="415" width="12" height="8"/>
          <!-- контур -->
          <g stroke="#000" stroke-width="1.500" stroke-linejoin="round">
            <path d="M511 348l87-26 360 105-88 26zM511 348v178l359 104 88-24V427M511 354l359 105 88-26M870 453v177M875 458v171"/>
            <path d="M631 389v171M751 425v171" stroke-width="2.500"/>
          </g>
          <!-- оси координат -->
          <g stroke-width="2.500"><path d="M598 501v-25" stroke="#1fc234"/><path d="M598 501l16 4" stroke="#c3262b"/><path d="M598 501l-14 4" stroke="#1a1ab8"/></g>
          <g stroke-width="1.500"><path d="M599 472l2 3 3-3M601 475v3" stroke="#1fc234"/><path d="M615 499l5 5M620 499l-5 5" stroke="#c3262b"/><path d="M584 499h5l-5 5h5" stroke="#1a1ab8"/></g>
        </svg>
        <div class="floating-bar">
          <button type="button" aria-label="Улучшить"><svg viewBox="0 0 24 24" fill="none" stroke="#777" stroke-width="1.500"><path d="M3 18L16 5q3-2 4 0t-1 4L6 21H3zM14 7l3 3M6 4v4M4 6h4M18 16v4M16 18h4M11 2v2M21 13h1"/></svg></button>
          <button type="button" aria-label="Перевести"><svg viewBox="0 0 24 24" fill="none" stroke="#222" stroke-width="2"><path d="M2 5h12M8 2v3M4 13q6-3 8-8M4 6q2 5 7 7M12 22l5-12 5 12M14 18h6"/></svg></button>
        </div>
      </div>
      <div class="doc-tabs">
        <div class="doc-tab">
          <span>Тумба подвесная 1 77</span>
          <button type="button" aria-label="Закрыть вкладку"><svg viewBox="0 0 8 8" stroke="#555" stroke-width="2"><path d="M1 1l6 6M7 1L1 7"/></svg></button>
        </div>
        <div class="doc-rest"></div>
      </div>
    </div>
    <div class="splitter"></div>
    <aside class="palette palette-right">
      <div class="grip-line"></div>
      <button type="button" aria-label="Чертеж"><svg viewBox="0 0 18 18" fill="none" stroke="#222"><path d="M1 3.500h17v12H1zM9 15V9h9M9 12h9M13 9v6"/></svg></button>
      <button type="button" aria-label="Отчет"><svg viewBox="0 0 18 18" stroke="#222"><path d="M7 1h8l3 3v11H7z" fill="#fff"/><path d="M9 5h7M9 8h7M9 11h7"/><path d="M4 9h3v3h3v3H7v3H4v-3H1v-3h3z" fill="#a9bfd5" stroke="#567"/></svg></button>
      <button type="button" aria-label="Экспорт"><svg viewBox="0 0 18 18" stroke="#222"><path d="M7 1h8l3 3v11H7z" fill="#fff"/><path d="M9 5h7M9 8h7M9 11h7"/><path d="M1 13l3 4M4 13l-3 4M6 17v-4l2 2 2-2v4M12 12v5" fill="none"/></svg></button>
      <hr>
      <button type="button" aria-label="Замена материала"><svg viewBox="0 0 18 18" stroke="#333"><path d="M5 1h13v15H5z" fill="#a5a8a2"/><path d="M1 4h11v12H1z" fill="#b8773d"/><path d="M6 6h6V3l6 5-6 5v-3H6z" fill="#20d533" stroke="#087816"/></svg></button>
      <hr>
      <button type="button" aria-label="Крепеж"><svg viewBox="0 0 18 18"><use href="#screw"/></svg></button>
      <button type="button" aria-label="Заменить крепеж"><svg viewBox="0 0 18 18"><use href="#screw"/><use href="#arrow"/></svg></button>
      <button type="button" aria-label="Удалить крепеж"><svg viewBox="0 0 18 18"><use href="#screw"/><use href="#cross"/></svg></button>
      <hr>
      <button type="button" aria-label="Добавить кромку"><svg viewBox="0 0 18 18"><use href="#edge"/><use href="#plus"/></svg></button>
      <button type="button" aria-label="Заменить кромку"><svg viewBox="0 0 18 18"><use href="#edge"/><use href="#arrow"/></svg></button>
      <button type="button" aria-label="Удалить кромку"><svg viewBox="0 0 18 18"><use href="#edge"/><use href="#cross"/></svg></button>
      <hr>
      <button type="button" aria-label="Облицовать"><svg viewBox="0 0 18 18"><use href="#solid" fill="#5d4bb0"/><use href="#plus"/></svg></button>
      <button type="button" aria-label="Снять облицовку" disabled><svg viewBox="0 0 18 18" stroke="#bbb"><path d="M1 5l4-4h13v13l-4 3H1z" fill="#dedede"/><path d="M1 5h13v12M1 9h13M1 13h13M5 5v12M9 5v12" fill="none"/></svg></button>
      <hr>
      <button type="button" aria-label="Паз"><svg viewBox="0 0 18 18"><use href="#groove"/></svg></button>
      <button type="button" aria-label="Заменить паз"><svg viewBox="0 0 18 18"><use href="#groove"/><use href="#arrow"/></svg></button>
      <button type="button" aria-label="Удалить паз"><svg viewBox="0 0 18 18"><use href="#groove"/><use href="#cross"/></svg></button>
    </aside>
  </main>

  <svg class="cursor" viewBox="0 0 12 18"><path d="M1 1v14l3-3 3 5 2-1-2-5h4z" fill="#fff" stroke="#222"/></svg>
  <div class="watermark">SOFTBAZA.NET</div>
</body>
</html>
```

FILE: styles.css
```css
* {
  box-sizing: border-box;
}

body {
  margin: 0;
  height: 100vh;
  display: flex;
  flex-direction: column;
  overflow: hidden;
  position: relative;
  background: #fff;
  border-left: 2px solid #747474;
  color: #111;
  font-family: "Open Sans", "Noto Sans", sans-serif;
  font-size: 10px;
  line-height: 16px;
}

button, select, input {
  font: inherit;
  color: inherit;
}

button {
  padding: 0;
  border: none;
  background: none;
}

svg {
  display: block;
  flex: none;
}

.sprite {
  position: absolute;
  width: 0;
  height: 0;
}

/* заголовок окна */
.titlebar {
  display: flex;
  align-items: center;
  height: 16px;
  flex: none;
}

.logo {
  width: 14px;
  height: 14px;
}

.caption {
  margin: 0 0 0 4px;
  font-size: 10px;
  font-weight: normal;
}

.window-buttons {
  display: flex;
  gap: 30px;
  margin-left: auto;
  padding-right: 10px;
}

.window-buttons svg {
  width: 10px;
  height: 10px;
}

/* меню */
.menubar {
  display: flex;
  align-items: center;
  gap: 14px;
  height: 25px;
  flex: none;
  border-bottom: 1px solid #ddd;
}

.menubar .grip {
  margin-right: -8px;
}

.menubar-right {
  display: flex;
  align-items: center;
  margin-left: auto;
}

.framed {
  border-left: 1px solid #aaa;
  padding: 0 9px;
}

.mdi {
  width: 17px;
}

.mdi svg {
  width: 10px;
  height: 10px;
  margin: auto;
}

.tri {
  display: inline-block;
  border: 3px solid transparent;
  border-top: 4px solid #222;
  border-bottom: 0;
  vertical-align: 2px;
}

.framed .tri {
  margin-left: 3px;
}

/* панели инструментов */
.toolrow {
  display: flex;
  height: 27px;
  flex: none;
}

.toolrow-views {
  justify-content: space-between;
}

.toolbar {
  display: flex;
  align-items: center;
  border-right: 1px solid #d8d8d8;
  border-bottom: 1px solid #d8d8d8;
}

.toolbar-zoom {
  margin-left: 176px;
}

.toolbar-empty {
  width: 28px;
  margin-right: 594px;
}

.toolbar-snap {
  padding-left: 23px;
  border-right: none;
}

.toolbar-props {
  padding-left: 2px;
}

.toolbar-model {
  padding-top: 4px;
}

.grip {
  width: 2px;
  height: 20px;
  margin: 0 2px;
  flex: none;
  background: repeating-linear-gradient(#b8b8b8 0 2px, transparent 2px 4px);
}

.grip-tight {
  margin: 0 0 0 2px;
}

.grip-tall {
  height: auto;
}

.grip-line {
  width: 20px;
  height: 2px;
  margin: 3px 2px 2px;
  background: repeating-linear-gradient(90deg, #b8b8b8 0 2px, transparent 2px 4px);
}

.tool {
  display: flex;
  align-items: center;
  justify-content: center;
  width: 24px;
  height: 23px;
  flex: none;
}

.tool svg {
  width: 18px;
  height: 18px;
}

.active {
  background: #cce6f8;
}

.drop {
  width: 8px;
  height: 22px;
  flex: none;
}

.sep {
  width: 1px;
  height: 22px;
  margin: 0 3px 0 2px;
  flex: none;
  background: #888;
}

.toolbar label {
  margin: 0 6px 0 5px;
}

.combo {
  position: relative;
  display: flex;
  align-items: center;
}

.combo select {
  width: 100%;
  height: 21px;
  padding: 0 3px;
  border: 1px solid #777;
  border-radius: 0;
  background: #fff;
  appearance: none;
}

.combo-small {
  width: 58px;
}

.combo-off select {
  border-color: #ccc;
  color: #888;
  opacity: 1;
}

.combo-layer {
  width: 160px;
  margin-left: 2px;
}

.combo-layer select {
  height: 23px;
  padding-left: 64px;
}

.layer-marks {
  position: absolute;
  left: 5px;
  display: flex;
  align-items: center;
  gap: 6px;
}

.mark {
  width: 14px;
  height: 16px;
}

.swatch {
  width: 16px;
  height: 16px;
  background: #000;
}

.chevron {
  position: absolute;
  right: 4px;
  width: 8px;
  height: 5px;
  fill: none;
  stroke: #555;
}

.combo-off .chevron {
  stroke: #bbb;
}

.line-sample {
  width: 54px;
  height: 19px;
  padding: 0 4px;
  border: 1px solid #ddd;
}

.line-sample span {
  display: block;
  height: 2px;
  background: #000;
}

/* панель построений */
.draw-panel {
  display: flex;
  width: 493px;
  height: 60px;
  flex: none;
  margin-top: 2px;
  border-top: 1px solid #ddd;
  border-right: 1px solid #ddd;
  border-bottom: 1px solid #ddd;
}

.draw-body {
  flex: 1;
  padding-right: 2px;
}

.draw-tools {
  display: flex;
  align-items: center;
  height: 36px;
  padding: 0 0 5px 10px;
  border: 1px solid #ddd;
  border-top: none;
}

.draw-tools .sep {
  margin: 0 1px 0 13px;
}

.draw-tabs {
  display: flex;
  align-items: flex-start;
}

.draw-tabs button {
  height: 17px;
  padding: 0 5px;
  background: #efefef;
  border-right: 1px solid #ddd;
}

.draw-tabs button[aria-selected] {
  height: 20px;
  padding: 3px 5px 0 8px;
  background: #fff;
}

/* координаты */
.coords {
  display: flex;
  align-items: center;
  height: 26px;
  flex: none;
  border-bottom: 1px solid #ddd;
}

.coords label {
  width: 7px;
  margin: 0 4px;
}

.coords input {
  width: 57px;
  height: 21px;
  padding: 0 2px;
  border: 1px solid #777;
}

.coords-end {
  width: 1px;
  height: 26px;
  margin-left: 6px;
  background: #ddd;
}

/* рабочая область */
.workspace {
  display: flex;
  flex: 1;
  min-height: 0;
}

.palette {
  display: flex;
  flex-direction: column;
  width: 25px;
  flex: none;
  align-self: flex-start;
  border-bottom: 1px solid #ddd;
}

.palette button {
  display: flex;
  align-items: center;
  height: 23px;
  padding-left: 2px;
}

.palette svg {
  width: 18px;
  height: 18px;
}

.palette hr {
  width: 20px;
  height: 1px;
  margin: 2px 2px 3px;
  border: none;
  background: #999;
}

.palette-right {
  width: 20px;
  overflow: hidden;
}

.palette-right hr {
  margin: 2px;
}

.splitter {
  width: 5px;
  flex: none;
  background: #efefef;
}

.splitter::before {
  content: "";
  display: block;
  width: 2px;
  height: 22px;
  margin: 314px 1px 0;
  background: repeating-linear-gradient(#aaa 0 2px, transparent 2px 4px);
}

.document {
  display: flex;
  flex-direction: column;
  flex: 1;
  min-width: 0;
}

.viewport {
  position: relative;
  flex: 1;
  border-bottom: 1px solid #ccc;
}

.model {
  position: absolute;
  left: 468px;
  top: 100px;
  width: 470px;
  height: 330px;
  shape-rendering: crispEdges;
}

.floating-bar {
  position: absolute;
  left: 135px;
  top: 218px;
  display: flex;
  align-items: center;
  justify-content: center;
  gap: 10px;
  width: 70px;
  height: 36px;
  border-radius: 18px;
  background: #fff;
  box-shadow: 0 1px 6px rgba(0, 0, 0, .2);
}

.floating-bar svg {
  width: 22px;
  height: 22px;
}

.doc-tabs {
  display: flex;
  height: 18px;
  flex: none;
}

.doc-tab {
  display: flex;
  align-items: center;
  gap: 11px;
  height: 26px;
  padding: 0 6px;
  border-left: 1px solid #ccc;
}

.doc-tab svg {
  width: 8px;
  height: 8px;
}

.doc-rest {
  flex: 1;
  margin-top: 2px;
  border: 1px solid #ccc;
  border-bottom: none;
}

.cursor {
  position: absolute;
  left: 163px;
  top: 53px;
  width: 12px;
  height: 18px;
}

.watermark {
  position: absolute;
  right: 14px;
  bottom: 18px;
  width: 153px;
  height: 33px;
  background: rgba(110, 110, 110, .85);
  color: #e4e4e4;
  font-family: "Liberation Sans Narrow", "Open Sans Condensed", "DejaVu Sans Condensed", sans-serif;
  font-size: 25px;
  font-weight: bold;
  line-height: 33px;
  text-align: center;
}
```
